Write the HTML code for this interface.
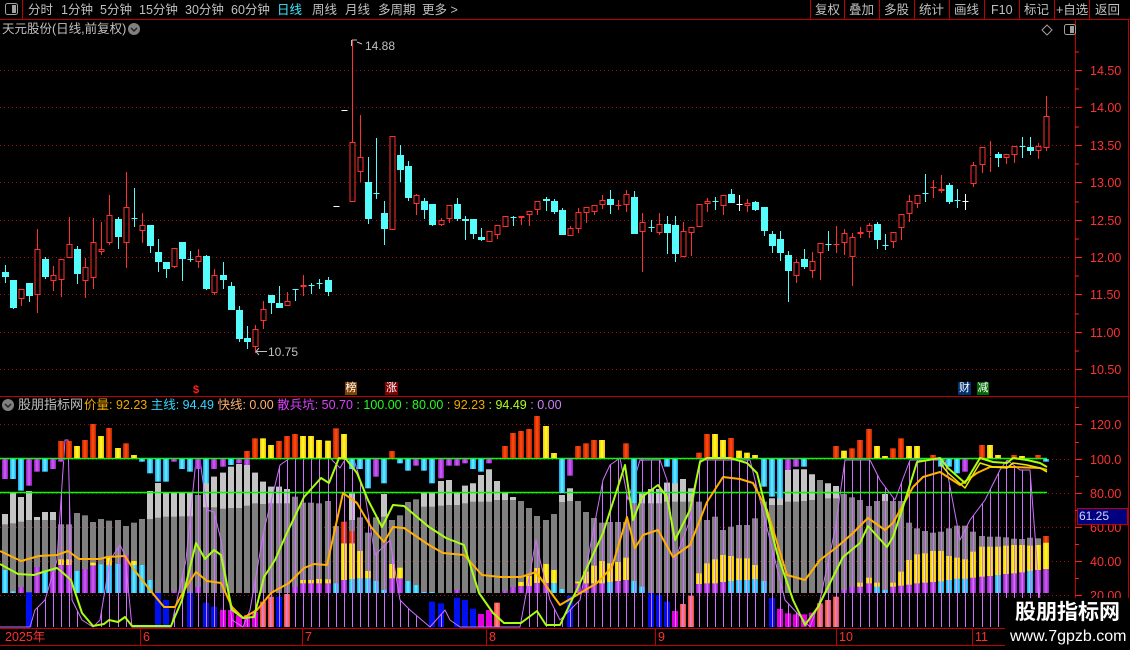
<!DOCTYPE html>
<html><head><meta charset="utf-8">
<style>
html,body{margin:0;padding:0;background:#000;width:1130px;height:650px;overflow:hidden}
body{position:relative;font-family:"Liberation Sans","Noto Sans CJK SC",sans-serif;color:#c0c0c0}
.t{position:absolute;white-space:nowrap;font-size:12.5px;line-height:14px}
svg{position:absolute;left:0;top:0}
</style></head>
<body>
<svg id="g" width="1130" height="650" viewBox="0 0 1130 650"></svg>

<!-- toolbar -->
<div class="t" style="left:28px;top:3px">分时</div>
<div class="t" style="left:61px;top:3px">1分钟</div>
<div class="t" style="left:100px;top:3px">5分钟</div>
<div class="t" style="left:139px;top:3px">15分钟</div>
<div class="t" style="left:185px;top:3px">30分钟</div>
<div class="t" style="left:231px;top:3px">60分钟</div>
<div class="t" style="left:277px;top:3px;color:#40e8ff">日线</div>
<div class="t" style="left:312px;top:3px">周线</div>
<div class="t" style="left:345px;top:3px">月线</div>
<div class="t" style="left:378px;top:3px">多周期</div>
<div class="t" style="left:422px;top:3px">更多 &gt;</div>
<div class="t" style="left:815px;top:3px">复权</div>
<div class="t" style="left:849px;top:3px">叠加</div>
<div class="t" style="left:884px;top:3px">多股</div>
<div class="t" style="left:919px;top:3px">统计</div>
<div class="t" style="left:954px;top:3px">画线</div>
<div class="t" style="left:991px;top:3px">F10</div>
<div class="t" style="left:1024px;top:3px">标记</div>
<div class="t" style="left:1056px;top:3px">+自选</div>
<div class="t" style="left:1095px;top:3px">返回</div>
<div class="t" style="left:2px;top:22px">天元股份(日线,前复权)</div>

<div class="t" style="left:365px;top:39px;font-size:12px">14.88</div>
<div class="t" style="left:268px;top:345px;font-size:12px">10.75</div>

<div class="t" style="left:18px;top:398px;font-size:13px">股朋指标网</div>
<div class="t" style="left:84px;top:398px;font-size:12.5px"><span style="color:#f0a800">价量: 92.23</span> <span style="color:#30d8ff">主线: 94.49</span> <span style="color:#ffb070">快线: 0.00</span> <span style="color:#e040ff">散兵坑: 50.70</span> <span style="color:#20ff20">: 100.00</span> <span style="color:#20ff20">: 80.00</span> <span style="color:#f0a800">: 92.23</span> <span style="color:#b0ff20">: 94.49</span> <span style="color:#d080ff">: 0.00</span></div>

<div id="ax"></div>
<div class="t" style="left:5px;top:630px;color:#ff3030;font-size:12.5px">2025年</div>
<div class="t" style="left:143px;top:630px;color:#ff3030">6</div>
<div class="t" style="left:305px;top:630px;color:#ff3030">7</div>
<div class="t" style="left:489px;top:630px;color:#ff3030">8</div>
<div class="t" style="left:658px;top:630px;color:#ff3030">9</div>
<div class="t" style="left:839px;top:630px;color:#ff3030">10</div>
<div class="t" style="left:975px;top:630px;color:#ff3030">11</div>

<div class="t" style="left:1077px;top:508px;width:48px;height:15px;background:#000080;border:1px solid #c00000;color:#d0d8ff;font-size:12px;line-height:15px;padding-left:1px">61.25</div>

<div style="position:absolute;left:1005px;top:598px;width:125px;height:52px;background:#000"></div>
<div class="t" style="left:1015px;top:601px;color:#fff;font-size:21px;line-height:24px;font-weight:bold">股朋指标网</div>
<div class="t" style="left:1010px;top:628px;color:#fff;font-size:16px;line-height:18px">www.7gpzb.com</div>

<div class="t" style="left:345px;top:382px;width:12px;height:13px;background:#804000;color:#fff;font-size:11px;line-height:13px;text-align:center">榜</div>
<div class="t" style="left:385px;top:382px;width:13px;height:13px;background:#800000;color:#fff;font-size:11px;line-height:13px;text-align:center">涨</div>
<div class="t" style="left:958px;top:382px;width:13px;height:13px;background:#003070;color:#fff;font-size:11px;line-height:13px;text-align:center">财</div>
<div class="t" style="left:977px;top:382px;width:12px;height:13px;background:#006800;color:#fff;font-size:11px;line-height:13px;text-align:center">减</div>
<div class="t" style="left:193px;top:383px;color:#ff2020;font-size:11px;font-weight:bold">$</div>

<script>
var S='';
function R(x,y,w,h,f){if(h<0){y+=h;h=-h;}S+='<rect x="'+x+'" y="'+y+'" width="'+w+'" height="'+h+'" fill="'+f+'"/>';}
function L(x1,y1,x2,y2,c,w,d){S+='<line x1="'+x1+'" y1="'+y1+'" x2="'+x2+'" y2="'+y2+'" stroke="'+c+'" stroke-width="'+(w||1)+'"'+(d?' stroke-dasharray="'+d+'"':'')+'/>';}
function P(pts,c,w){S+='<polyline fill="none" stroke="'+c+'" stroke-width="'+w+'" stroke-linejoin="round" points="'+pts.map(function(p){return p[0]+','+p[1]}).join(' ')+'"/>';}
function X(i){return 4.5+8.075*i;}
function interp(pts,x){if(x<=pts[0][0])return pts[0][1];for(var k=1;k<pts.length;k++){if(x<=pts[k][0]){var a=pts[k-1],b=pts[k];return a[1]+(b[1]-a[1])*(x-a[0])/(b[0]-a[0]);}}return pts[pts.length-1][1];}
S+='<defs>'+
'<linearGradient id="gr"><stop offset="0" stop-color="#c02000"/><stop offset=".5" stop-color="#ff5010"/><stop offset="1" stop-color="#c02000"/></linearGradient>'+
'<linearGradient id="gy"><stop offset="0" stop-color="#f0c000"/><stop offset=".5" stop-color="#ffff30"/><stop offset="1" stop-color="#f0c000"/></linearGradient>'+
'<linearGradient id="gc"><stop offset="0" stop-color="#10a8f0"/><stop offset=".5" stop-color="#70f0ff"/><stop offset="1" stop-color="#10a8f0"/></linearGradient>'+
'<linearGradient id="gm"><stop offset="0" stop-color="#9020c8"/><stop offset=".5" stop-color="#d060f0"/><stop offset="1" stop-color="#9020c8"/></linearGradient>'+
'<linearGradient id="gs"><stop offset="0" stop-color="#f04040"/><stop offset=".5" stop-color="#ff9080"/><stop offset="1" stop-color="#f04040"/></linearGradient>'+
'</defs>';
var COL={r:'url(#gr)',y:'url(#gy)',c:'url(#gc)',m:'url(#gm)',b:'#0010f0',p:'#e000e0',s:'url(#gs)'};

// frame lines
L(0,19.5,1130,19.5,'#c00000');
[22.5,810.5,844.5,879.5,914.5,949.5,984.5,1019.5,1054.5,1089.5].forEach(function(x){L(x,0,x,19,'#c00000');});
L(0,396.5,1130,396.5,'#c00000');
L(0,628.5,1130,628.5,'#c00000');
L(0,645.5,1130,645.5,'#c00000');
L(1075.5,20,1075.5,645,'#c00000');
L(1128.5,20,1128.5,645,'#c00000');
// left icon
S+='<rect x="5.5" y="3.5" width="12" height="11" rx="2" fill="none" stroke="#a0a0a0"/><rect x="12" y="5" width="4" height="8" fill="#a0a0a0"/>';
S+='<rect x="1064.5" y="24.5" width="11" height="10" rx="2" fill="none" stroke="#a0a0a0"/><rect x="1070" y="26" width="4" height="7" fill="#a0a0a0"/>';
S+='<path d="M1047 25 L1052 30 L1047 35 L1042 30 Z" fill="none" stroke="#a0a0a0"/>';
S+='<circle cx="134" cy="29" r="6" fill="#808080"/><path d="M131 28 L134 31 L137 28" fill="none" stroke="#222" stroke-width="1.5"/>';
S+='<circle cx="8" cy="405" r="6" fill="#808080"/><path d="M5 404 L8 407 L11 404" fill="none" stroke="#222" stroke-width="1.5"/>';

// main grid and axis
function py(p){return 70+(14.5-p)*74.75;}
var lab='';
for(var p=10.5;p<=14.51;p+=0.5){var y=Math.round(py(p))+0.5;L(0,y,1072,y,'#a01010',1,'1,3');L(1075,y,1082,y,'#ff2020');lab+='<div class="t" style="left:1090px;top:'+(y-7)+'px;color:#ff3030;font-size:12.5px">'+p.toFixed(2)+'</div>';L(1075,y-18.5,1079,y-18.5,'#ff2020');}
// indicator grid
[[424,'120.0'],[459,'100.0'],[493,'80.00'],[527,'60.00'],[561,'40.00'],[595,'20.00']].forEach(function(a){var y=a[0]+0.5;L(0,y,1072,y,'#a01010',1,'1,3');L(1075,y,1082,y,'#ff2020');L(1075,y-17,1079,y-17,'#ff2020');lab+='<div class="t" style="left:1090px;top:'+(y-7)+'px;color:#ff3030;font-size:12.5px">'+a[1]+'</div>';});
document.getElementById('ax').innerHTML=lab;
// date ticks
[140,302,486,655,836,972].forEach(function(x){L(x+.5,629,x+.5,645,'#c00000');});

// candles
var C=[['c',272,277,265,283],['c',280,308,280,309],['r',289,299,289,306],['c',283,296,283,302],['r',249,295,229,313],['c',259,277,257,279],['r',275,281,266,291],['r',259,280,259,297],['r',244,258,217,258],['c',249,274,246,284],['r',267,281,258,298],['r',242,278,218,289],['r',249,252,222,255],['r',215,243,195,245],['c',219,237,217,249],['r',207,243,172,268],['c',218,218,188,227],['r',225,231,213,243],['c',225,246,225,253],['c',252,262,239,272],['c',262,269,262,278],['r',248,267,248,268],['c',242,259,242,281],['c',259,259,251,262],['r',256,262,249,268],['c',256,289,255,290],['r',275,293,269,295],['c',275,280,262,289],['c',286,310,282,310],['c',310,339,306,342],['c',338,342,326,349],['r',329,347,325,353],['r',309,321,301,329],['c',295,303,295,314],['c',303,308,286,308],['r',301,306,292,306],['c',289,289,289,301],['r',285,287,275,296],['c',285,285,283,294],['c',283,283,279,289],['c',280,292,277,296],['d',206],['d',110],
['r',142,202,40,202],['r',157,172,115,182],['c',182,219,157,224],['c',193,193,138,199],['c',213,229,201,245],['r',136,230,136,230],['c',155,170,145,182],['c',166,198,161,201],['r',195,204,194,215],['c',201,210,198,219],['c',204,225,204,226],['r',220,225,218,226],['r',205,219,205,223],['c',204,219,198,221],['c',219,221,216,240],['c',219,234,219,239],['c',237,240,228,241],['r',231,242,231,242],['r',225,235,225,239],['r',216,227,216,227],['c',217,217,216,226],['r',216,218,216,225],['r',211,215,211,226],['r',201,210,201,215],['c',199,201,197,211],['c',201,212,199,214],['c',210,235,208,235],['r',228,236,226,236],['r',212,229,208,233],['r',207,213,207,223],['r',205,212,205,215],['r',200,205,195,209],['c',199,205,190,214],['r',205,205,200,210],['r',194,205,190,212],['c',197,234,191,234],['r',222,232,213,272],['c',227,227,220,232],['r',224,233,213,235],['c',224,233,216,254],['c',225,254,216,262],
['r',231,257,222,257],['r',227,233,227,256],['r',204,227,204,227],['r',201,204,198,212],['c',201,201,197,210],['r',195,206,195,215],['c',194,203,189,203],['w',204,204,195,211],['r',203,206,199,212],['c',202,210,201,211],['c',207,231,207,236],['c',234,246,231,253],['c',239,253,231,261],['c',255,271,251,302],['r',262,276,259,283],['c',259,267,249,269],['r',261,271,252,278],['r',243,253,243,280],['c',244,244,231,251],['r',244,244,226,253],['r',233,243,229,255],['r',237,257,233,286],['r',232,234,227,238],['r',225,232,223,238],['c',224,240,222,249],['c',245,245,234,250],['r',232,242,232,248],['r',214,228,214,240],['r',201,214,195,222],['r',195,204,195,208],['c',193,193,174,202],['r',187,187,180,198],['r',189,191,175,193],['c',185,202,183,204],['c',200,200,189,208],['w',201,201,194,210],['r',165,184,162,187],['r',147,165,147,173],['r',156,157,141,172],['c',154,158,152,167],['r',154,158,154,164],['r',146,155,146,163],['c',146,146,137,158],['c',147,151,137,155],['r',146,151,143,159],['r',116,148,96,151]];
C.forEach(function(c,i){var x=Math.round(X(i))+0.5;var t=c[0];
 if(t=='d'){L(x-3,c[1]+.5,x+3,c[1]+.5,'#ffffff');return;}
 var col=t=='r'?'#ff3030':(t=='w'?'#ffffff':'#54fcfc');
 var top=c[1],bot=c[2],hi=c[3],lo=c[4];
 if(bot-top<1){L(x,hi,x,lo,col);L(x-3,top+.5,x+3,top+.5,col);return;}
 if(t=='r'){ if(hi<top)L(x,hi,x,top,col); if(lo>bot)L(x,bot,x,lo,col); S+='<rect x="'+(x-2.5)+'" y="'+(top+.5)+'" width="5" height="'+(bot-top-1)+'" fill="#000" stroke="'+col+'"/>';}
 else {L(x,hi,x,lo,col);R(x-3.5,top,7,bot-top,col);}
});
// markers
L(351.5,40,351.5,46,'#c0c0c0');S+='<path d="M352 40 L357 40 M357 42 L362 44" stroke="#c0c0c0" fill="none"/>';
L(256,351.5,267,351.5,'#c0c0c0');S+='<path d="M259 348 L256 351.5 L259 355" stroke="#c0c0c0" fill="none"/>';

// ---------- indicator -----------
function zy(z){return 420+z/3;}
var N=130,D=[];for(var i=0;i<N;i++)D.push({G:0,L:0,C:'',Y:0,R:0,T:'',H:'',B:''});
var G10=[282,218,231,213,291,276,276,313,279,286,306,297,302,300,318,308,297,213,189,219,219,217,225,182,170,158,140,132,128,158,185,200,200,207,230,248,250,243,318,320,220,292,338,292,222,300,286,246,238,218,183,180,218,197,190,165,148,183,218,230,240,264,290,300];
var L10=[313,310,305,300,300,300,300,0,0,0,0,0,0,0,0,0,0,297,293,290,290,289,0,262,262,266,264,264,257,250,252,250,250,250,0,0,0,0,0,0,300,0,0,0,290,0,0,0,0,260,257,255,255,250,245,245,245,240,0,0,0,0,0,0];
var C10=['c450','c514','m501','','m441','c455','m455','m435','c453','m447','m436','c433','c436','c432','m405','c435','c435','c480','','','m514','','m501','','','','','','','','','','','','m500','m490','m490','m490','c490','m480','c477','c475','c475','c483','c510','m475','m475','c483','c495','c516','','','m510','','','','','','','m514','m500','m500','m490','c490'];
var Y10={7:418,10:428,12:410,15:423,35:480,36:477,37:478,39:370,40:370,41:393,42:453,45:432,46:443,60:487,61:470,62:440,63:432};
var R10={39:320,40:348};
var T10={7:'r63',8:'y78',9:'r60',10:'r12',11:'y48',12:'r24',13:'y84',14:'r70',15:'y105',28:'r93',29:'r55',30:'y55',31:'y75',32:'r63',33:'r48',34:'r42',35:'y48',36:'y60',37:'y62',38:'r25',39:'y42',45:'r93'};
for(var i=0;i<62;i++){var k=Math.round((X(i)*2.8-13.5)/24.2);if(k>63)k=63;var d=D[i];d.G=G10[k];d.L=L10[k];d.C=C10[k];d.Y=Y10[k]||0;d.R=R10[k]||0;d.T=T10[k]||'';}
function near(x){return Math.max(0,Math.min(N-1,Math.round((x-4.5)/8.075)));}
[[10,'m177'],[35,'c177'],[57,'c212'],[80,'m197'],[101,'m155'],[124,'c155'],[146,'m147'],[170,'m125'],[395,'c125'],[420,'c160'],[441,'c185'],[462,'c185'],[485,'m125'],[506,'c147'],[530,'c155'],[555,'m147'],[576,'c190'],[599,'m147'],[622,'m140'],[645,'c135'],[669,'m130'],[691,'m135'],[985,'c147'],[1006,'c147'],[1030,'c205'],[1051,'m170'],[1074,'c190'],[1120,'c130'],[1144,'c152'],[1166,'m137'],[1189,'c152'],[1211,'c190'],[1235,'m175'],[1259,'m137'],[1281,'m137'],[1303,'m130'],[1324,'c147'],[1347,'c155'],[1369,'m130']].forEach(function(a){D[near(a[0]/2.8)].H=a[1];});
[[80,'b517'],[442,'b519'],[465,'b540'],[530,'b519'],[578,'b548'],[600,'b560'],[620,'p570'],[642,'p570'],[665,'p585'],[688,'p585'],[710,'p575'],[730,'s545'],[755,'s530'],[778,'b530'],[802,'s522'],[1210,'b545'],[1232,'b550'],[1278,'b533'],[1301,'b540'],[1323,'b566'],[1342,'p582'],[1365,'p570'],[1394,'s548']].forEach(function(a){D[near(a[0]/2.8)].B=a[1];});
// i62..
var RT={
62:{G:219,L:240,C:'m513',T:'r78'},63:{G:231,L:240,C:'m501',T:'r39'},64:{G:243,Y:486,C:'m498',T:'r33'},65:{G:264,Y:468,C:'m498',T:'r27'},66:{G:288,Y:444,C:'m489',T:'r-12'},67:{G:300,Y:432,C:'m489',T:'y18'},68:{G:282,Y:450,C:'c489',T:'y99'},
69:{G:225,L:246,C:'c507',H:'c219'},70:{G:205,L:243,H:'m167',B:'b527'},71:{G:243,Y:485,C:'m490',T:'r78'},72:{G:276,Y:455,C:'m490',T:'r70'},73:{G:294,Y:437,C:'m490',T:'r60'},74:{G:308,Y:423,C:'m490',T:'y60'},75:{G:306,Y:430,C:'c486'},76:{G:306,Y:426,C:'m483'},77:{G:306,Y:413,C:'m480',T:'r70'},78:{G:250,C:'c483',H:'c250'},79:{G:220,L:250,C:'c500',H:'m123'},
80:{G:207,L:250,B:'b520'},81:{G:207,L:250,B:'b525'},82:{G:188,L:245,H:'c140',B:'b545'},83:{G:160,L:245,H:'c190',B:'p573'},84:{G:177,L:245,B:'s552'},85:{G:205,L:245,B:'s527'},86:{G:245,Y:460,C:'m492',T:'r98'},87:{G:300,Y:430,C:'m490',T:'r42'},88:{G:290,Y:418,C:'m490',T:'y42'},89:{G:330,Y:405,C:'m486',T:'y60'},90:{G:320,Y:408,C:'c483',T:'r54'},91:{G:315,Y:415,C:'c480',T:'y92'},92:{G:315,Y:415,C:'c480',T:'y98'},93:{G:295,Y:435,C:'c477',T:'y105'},94:{G:245,C:'c483',H:'c200'},95:{G:235,L:255,H:'c230',B:'b534'},96:{G:165,L:255,H:'c235',B:'p567'},97:{G:150,L:245,H:'m150',B:'p580'},98:{G:148,L:245,H:'m140',B:'p583'},99:{G:148,L:243,H:'c140',B:'p583'},100:{G:163,L:240,B:'p578'},101:{G:180,B:'s550'},102:{G:190,L:235,B:'s540'},103:{G:198,L:235,B:'s530',T:'r78'},104:{G:222,C:'m510',T:'y92'},105:{G:232,C:'m500',T:'r85'},106:{G:240,Y:488,C:'m500',T:'r60'},107:{G:258,Y:473,C:'m490',T:'r27'},108:{G:243,Y:488,C:'c500',T:'y78'},109:{G:222,L:243,C:'c510',T:'y108'},110:{G:243,Y:488,C:'m500',T:'r85'},111:{G:243,Y:455,C:'m497',T:'r55'},112:{G:308,Y:420,C:'m494',T:'y78'},113:{G:325,Y:403,C:'m490',T:'y78'},114:{G:333,Y:400,C:'m488'},115:{G:338,Y:393,C:'m486',T:'r105'},116:{G:335,Y:393,C:'c484',H:'c140'},117:{G:325,Y:408,C:'c480',H:'c140'},118:{G:317,Y:413,C:'c476',H:'c160'},119:{G:317,Y:418,C:'c476',H:'m155'},120:{G:335,Y:395,C:'m473'},121:{G:348,Y:380,C:'m470',T:'r75'},122:{G:350,Y:380,C:'m468',T:'y75'},123:{G:350,Y:380,C:'c465',T:'y105'},124:{G:352,Y:377,C:'m462'},125:{G:356,Y:375,C:'m460',T:'r105'},126:{G:357,Y:375,C:'m457',T:'y108'},127:{G:353,Y:377,C:'c453'},128:{G:355,Y:375,C:'m450',T:'r105'},129:{G:363,Y:368,R:363,C:'m447',H:'c125'}};
for(var k in RT){var o=RT[k];D[k]={G:o.G||0,L:o.L||0,C:o.C||'',Y:o.Y||0,R:o.R||0,T:o.T||'',H:o.H||'',B:o.B||''};}

var VIO=[[0,627],[30,627],[35,610],[45,600],[57,560],[65,440],[68,440],[72,600],[82,620],[93,627],[100,620],[110,560],[120,545],[125,555],[132,627],[171,627],[186,560],[196,460],[200,460],[207,510],[214,512],[221,540],[232,620],[243,627],[250,610],[264,530],[280,465],[290,458],[330,458],[340,468],[346,458],[355,463],[365,495],[375,555],[390,540],[400,600],[410,610],[430,627],[445,610],[450,620],[460,627],[520,627],[536,540],[540,560],[550,600],[560,620],[580,600],[603,480],[610,465],[620,458],[628,500],[640,460],[660,460],[667,480],[675,560],[690,520],[700,460],[750,460],[765,520],[785,600],[810,627],[820,600],[835,530],[845,460],[870,460],[880,480],[895,500],[910,460],[945,460],[960,540],[970,520],[985,500],[1000,470],[1007,460],[1020,470],[1030,470],[1040,600],[1047,610]];

var BOT=593;
D.forEach(function(d,i){var x=Math.round(X(i))-3;
 if(d.G){R(x,zy(d.G),6,BOT-zy(d.G),'#808080'); if(d.L&&d.L>d.G)R(x,zy(d.G),6,zy(d.L)-zy(d.G),'#c4c4c4');}
 var ct=BOT;
 if(d.C){var z=+d.C.slice(1);R(x,zy(z),6,BOT-zy(z),COL[d.C[0]]);ct=zy(z);}
 if(d.Y){R(x,zy(d.Y),6,ct-zy(d.Y),COL.y);ct=zy(d.Y);}
 if(d.R){R(x,zy(d.R)-5,6,ct-zy(d.R)+5,'url(#gr)');}
 if(d.B){var z=+d.B.slice(1);R(x,zy(z),6,627-zy(z),COL[d.B[0]]);}
});
// violet verticals
D.forEach(function(d,i){var x=Math.round(X(i))+0.5;var vy=interp(VIO,x);if(vy<618)L(x,vy,x,627,'#d070ff');});
P(VIO,'#d070ff',1);
L(0,458.5,1047,458.5,'#00ff00',1.5);
L(0,492.5,1047,492.5,'#00ff00',1.5);
D.forEach(function(d,i){var x=Math.round(X(i))-3;
 if(d.T){var z=+d.T.slice(1);R(x,zy(z),6,458-zy(z),COL[d.T[0]]);}
 if(d.H){var z=+d.H.slice(1);R(x,459,6,zy(z)-459,COL[d.H[0]]);}
});
var OR=[[0,551],[21,561],[39,556],[57,555],[68,551],[79,559],[100,559],[107,557],[125,556],[132,567],[150,590],[164,607],[175,607],[186,587],[196,572],[207,581],[221,583],[232,607],[243,618],[257,610],[271,593],[289,583],[304,568],[314,564],[327,565],[343,493],[357,503],[371,527],[384,542],[393,527],[404,528],[429,545],[443,553],[464,555],[482,575],[500,577],[521,577],[536,572],[560,605],[577,595],[597,583],[612,567],[627,517],[635,548],[643,535],[658,530],[673,557],[690,545],[707,502],[723,477],[740,479],[753,483],[767,510],[787,575],[805,580],[820,560],[837,547],[853,533],[868,518],[885,530],[893,523],[913,487],[923,477],[940,472],[960,485],[977,473],[990,467],[1013,467],[1040,468],[1047,470]];
var GR=[[0,564],[18,574],[34,575],[43,572],[57,568],[62,572],[71,580],[82,613],[93,626],[104,624],[109,620],[118,622],[125,617],[132,626],[171,626],[182,600],[196,543],[205,559],[214,550],[221,555],[232,610],[243,618],[254,617],[264,577],[275,560],[286,535],[304,497],[321,478],[329,483],[339,458],[346,459],[357,473],[368,500],[382,527],[393,505],[404,506],[429,527],[446,538],[464,545],[479,593],[493,613],[504,623],[521,623],[537,611],[546,625],[560,625],[580,583],[603,533],[625,465],[633,520],[642,497],[658,485],[667,497],[675,540],[690,510],[700,462],[707,458],[730,458],[747,463],[757,473],[777,553],[793,600],[805,625],[818,607],[830,583],[843,557],[860,543],[868,526],[887,547],[893,537],[903,507],[917,462],[940,458],[948,468],[965,483],[980,458],[993,462],[1007,463],[1013,458],[1027,460],[1040,463],[1047,467]];
P(OR,'#ffb000',2);
P(GR.filter(function(p){return p[0]>=930}).map(function(p){return [p[0],p[1]+5]}),'#e8e800',1.5);
P(GR,'#a8ff10',2);

document.getElementById('g').innerHTML=S;
</script>
</body></html>
